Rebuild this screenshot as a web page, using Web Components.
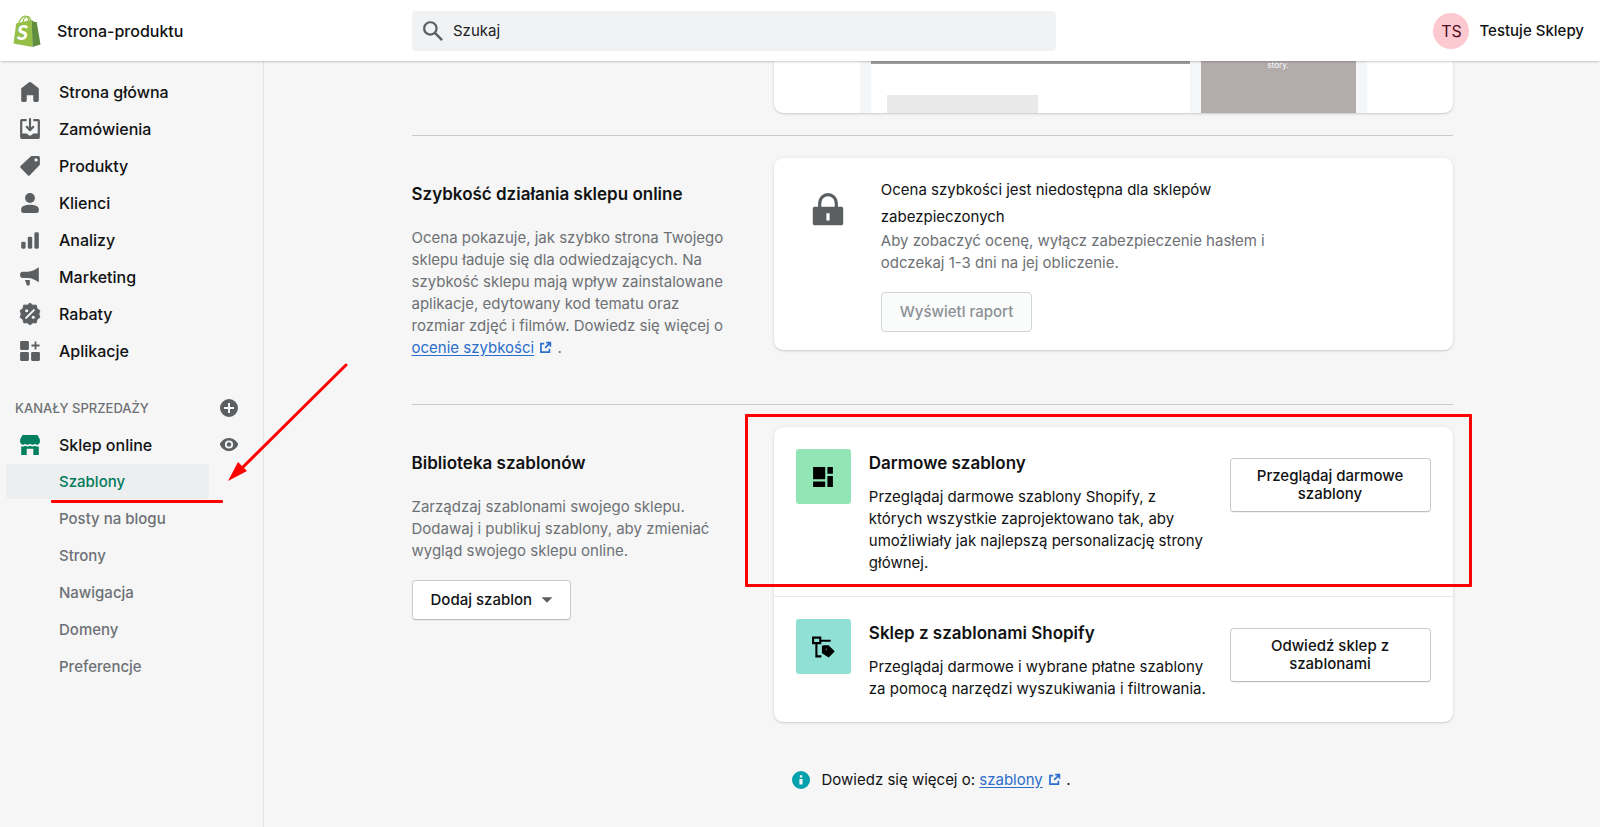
<!DOCTYPE html>
<html lang="pl">
<head>
<meta charset="utf-8">
<meta name="viewport" content="width=device-width, initial-scale=1">
<title>Strona-produktu</title>
<style>
	body {
		margin: 0;
		background: #f6f6f6;
		color: #111213;
		font: 15px/22px Inter, "Noto Sans", sans-serif;
	}
</style>
</head>
<body>
<admin-shell></admin-shell>

<script>
const icons = {
	home: '<path d="M18 7.26V17.5c0 .84-.67 1.5-1.5 1.5h-2.2c-.83 0-1.3-.66-1.3-1.5V13H7v4.5c0 .84-.47 1.5-1.3 1.5H3.5c-.83 0-1.5-.68-1.5-1.52V7.26a1.5 1.5 0 0 1 .615-1.21l6.59-4.82a1.48 1.48 0 0 1 1.59 0l6.59 4.82A1.5 1.5 0 0 1 18 7.26z"/>',
	orders: '<path d="M11 1a1 1 0 1 0-2 0v7.586L7.707 7.293a1 1 0 0 0-1.414 1.414l3 3a1 1 0 0 0 1.414 0l3-3a1 1 0 0 0-1.414-1.414L11 8.586V1z"/><path d="M3 14V3h4V1H2.5A1.5 1.5 0 0 0 1 2.5v15A1.5 1.5 0 0 0 2.5 19h15a1.5 1.5 0 0 0 1.5-1.5v-15A1.5 1.5 0 0 0 17.5 1H13v2h4v11h-3.5c-.775 0-1.388.662-1.926 1.244l-.11.12A1.994 1.994 0 0 1 10 16a1.994 1.994 0 0 1-1.463-.637l-.111-.12C7.888 14.664 7.275 14 6.5 14H3z"/>',
	products: '<path fill-rule="evenodd" d="M10.6 1.4A1.4 1.4 0 0 1 11.6 1H17.6A1.4 1.4 0 0 1 19 2.4v6a1.4 1.4 0 0 1-.4 1l-9 9.2a1 1 0 0 1-1.4 0l-6.8-7.1a1 1 0 0 1 0-1.4zM15.5 6a1.5 1.5 0 1 0 0-3 1.5 1.5 0 0 0 0 3z"/>',
	customers: '<circle cx="10" cy="5.5" r="4.5"/><path d="M2 15.5C2 12.5 6.5 11.5 10 11.5s8 1 8 4V17a2 2 0 0 1-2 2H4a2 2 0 0 1-2-2z"/>',
	analytics: '<rect x="2" y="11.5" width="4" height="6.5" rx="1.3"/><rect x="8" y="7" width="4" height="11" rx="1.3"/><rect x="14" y="3" width="4" height="15" rx="1.3"/>',
	marketing: '<path d="M18 1.2v13.6c-3.5-2.5-6.5-3.6-10-3.8H3.500A2.5 2.5 0 0 1 1 8.5v-.8a2.5 2.5 0 0 1 2.5-2.5H8c3.5-.2 6.500-1.500 10-4z"/><path d="M5.500 12.700h4.300v4.100a1 1 0 0 1-1 1H8a1 1 0 0 1-1-.8z"/>',
	discounts: '<path d="M10 0l2.5 2 3.2-.1.7 3.2 2.600 1.900-1 3 1 3-2.600 1.900-.7 3.200-3.200-.1L10 20l-2.500-2-3.200.1-.7-3.200L1 13l1-3-1-3 2.600-1.900.7-3.200 3.200.1z" stroke="currentColor" stroke-linejoin="round" stroke-width=".8"/><path d="M6.500 13.500l7-7" stroke="#f6f6f6" stroke-width="1.800" stroke-linecap="round"/><circle cx="7" cy="7" r="1.400" fill="#f6f6f6"/><circle cx="13" cy="13" r="1.400" fill="#f6f6f6"/>',
	apps: '<rect x="1" y="1" width="8" height="8" rx="1"/><rect x="1" y="11" width="8" height="8" rx="1"/><rect x="11" y="11" width="8" height="8" rx="1"/><path d="M14.200 1.300h1.600v2.900h2.900v1.600h-2.900v2.900h-1.600V5.800h-2.900V4.200h2.900z"/>',
	store: '<path d="M3.200 1h13.600L19 5v2.200a2.600 2.600 0 0 1-4.500 1.600 3 3 0 0 1-4.500 0 3 3 0 0 1-4.500 0A2.600 2.600 0 0 1 1 7.200V5z"/><path d="M2 11.300c1.300.3 2.600 0 3.500-.7 1.300.9 3.200.9 4.500 0 1.300.9 3.200.9 4.500 0 .9.7 2.200 1 3.500.7V19h-5v-5.500H7V19H2z"/>',
	plus: '<path fill-rule="evenodd" d="M10 1a9 9 0 1 1 0 18 9 9 0 0 1 0-18zM9 5v4H5v2h4v4h2v-4h4V9h-4V5z"/>',
	eye: '<path fill-rule="evenodd" d="M19 8.700C18 6.500 14.500 3 10 3S2 6.500 1 8.700v1C2 12.500 5.500 16 10 16s8-3.500 9-6.300zM10 13.600a4.100 4.100 0 1 1 0-8.200 4.100 4.100 0 0 1 0 8.200z"/><circle cx="10" cy="9.500" r="2.200"/>',
	search: '<path fill-rule="evenodd" d="M2 8a6 6 0 1 1 10.900 3.500l5.500 5.400-1.500 1.500-5.400-5.500A6 6 0 0 1 2 8zm6-4.200a4.200 4.200 0 1 0 0 8.400 4.200 4.200 0 0 0 0-8.400z" transform="translate(-1.200 -1.200) scale(1.100)"/>',
	external: '<path d="M8 4H3v13h13v-5M11 2.500h6.500V9M17 3l-7.500 7.500" fill="none" stroke="currentColor" stroke-width="2.600"/>',
	caret: '<path d="M4 7h12l-6 6z"/>',
	info: '<path fill-rule="evenodd" d="M10 0a10 10 0 1 1 0 20 10 10 0 0 1 0-20zM8.700 4.800v2.400h2.700V4.800zM8.200 9v6h3.500V9z"/>',
	lock: '<path fill-rule="evenodd" d="M1.500 8h17a1 1 0 0 1 1 1v9.500a1 1 0 0 1-1 1h-17a1 1 0 0 1-1-1V9a1 1 0 0 1 1-1zM9 12v4.500h2V12z"/><path d="M4.800 9V5.600a5.200 5.200 0 0 1 10.400 0V9" fill="none" stroke="currentColor" stroke-width="2"/>',
	layout: '<path d="M1 1h11v11H1zM1 14h11v5H1zM14 1h5v6h-5zM14 9h5v10h-5z"/>',
	structure: '<path d="M1 1.500h6.500v5H1zM7.500 4.300H17M4 6.500v12h4.500" fill="none" stroke="currentColor" stroke-width="1.900"/><path fill-rule="evenodd" d="M10 9h5l5 5-5 5-5.500-3.800V9.500zM12 11v2h2v-2z" stroke="currentColor" stroke-linejoin="round"/>'
};

class BaseElement extends HTMLElement {
	constructor() {
		super();
		this.attachShadow({ mode: 'open' });
	}

	connectedCallback() {
		this.shadowRoot.innerHTML = `<style>*, *::before { box-sizing: border-box; }${this.css()}</style>${this.markup()}`;
	}
}

class AdminIcon extends BaseElement {
	css = () => `
		:host { display: inline-flex; flex: none; width: var(--icon-size, 22px); height: var(--icon-size, 22px); }
		svg { width: 100%; height: 100%; fill: currentColor; overflow: visible; }`;

	markup = () => `<svg viewBox="0 0 20 20" aria-hidden="true">${icons[this.getAttribute('name')]}</svg>`;
}

class AdminButton extends BaseElement {
	css = () => `
		:host { display: inline-flex; }
		button {
			display: flex;
			align-items: center;
			justify-content: center;
			gap: 6px;
			width: 100%;
			min-height: 40px;
			padding: 8px 18px;
			border: 1px solid #c9cccf;
			border-bottom-color: #babfc3;
			border-radius: 4px;
			background: white;
			color: inherit;
			font: 500 15px/18px Inter, sans-serif;
			box-shadow: 0 1px 0 rgba(0, 0, 0, 0.05);
		}
		button:disabled {
			border-color: #d2d5d8;
			background: #fafbfb;
			color: #8c9196;
			box-shadow: none;
		}`;

	markup = () => `<button type="button" ${this.hasAttribute('disabled') ? 'disabled' : ''}><slot></slot></button>`;
}

class ExternalLink extends BaseElement {
	css = () => `
		a { color: #2c6ecb; text-underline-offset: 2px; }
		admin-icon { --icon-size: 13px; color: #2c6ecb; margin: 0 1px; vertical-align: -1px; }`;

	markup = () => `<a href="#"><slot></slot></a> <admin-icon name="external"></admin-icon>`;
}

class ShopLogo extends BaseElement {
	css = () => `
		:host { display: block; width: 28px; height: 32px; }
		text { font: italic 900 21px Lato, sans-serif; fill: white; }`;

	markup = () => `
		<svg width="28" height="32" viewBox="0 0 28 32" aria-hidden="true">
			<path d="M6 8C7 4 10 1 12.500 1.200c2 .2 3 3 3 5.500M10 7c.5-3 2.500-5.500 5-5.300 1.500.2 2.300 2 2.500 4" fill="none" stroke="#95bf47" stroke-width="1.300"/>
			<path d="M3.200 8.600L18.700 4.800 19.500 32 .5 28.500z" fill="#95bf47"/>
			<path d="M18.700 4.800l2 1.900 3 .3 3.800 22.500L19.500 32z" fill="#5e8e3e"/>
			<text x="4" y="25">S</text>
		</svg>`;
}

class TopBar extends BaseElement {
	css = () => `
		:host {
			display: grid;
			grid-template-columns: 264px 1fr;
			align-items: center;
			height: 61px;
			background: white;
			box-shadow: 0 2px 2px -1px rgba(0, 0, 0, 0.2);
			position: relative;
			z-index: 2;
			font-weight: 500;
		}
		.brand { display: flex; align-items: center; gap: 16px; padding-left: 13px; font-size: 16px; }
		.tools {
			display: flex;
			align-items: center;
			justify-content: space-between;
			gap: 22px;
			padding: 0 16px 0 max(22px, calc((100% - 1040px) / 2));
		}
		label {
			flex: 0 1 644px;
			display: flex;
			align-items: center;
			gap: 9px;
			height: 40px;
			padding: 0 10px;
			border-radius: 4px;
			background: #f1f2f4;
			color: #5c5f62;
		}
		input {
			flex: 1;
			min-width: 0;
			border: 0;
			padding: 0;
			background: none;
			font: 400 15px/22px Inter, sans-serif;
			color: #111213;
		}
		input::placeholder { color: #202223; opacity: 1; }
		.user { display: flex; align-items: center; gap: 10px; white-space: nowrap; }
		.avatar {
			width: 36px;
			border-radius: 50%;
			background: #fdc9d0;
			color: #4f0e1f;
			font-size: 16px;
			font-weight: 400;
			line-height: 36px;
			text-align: center;
		}`;

	markup = () => `
		<div class="brand"><shop-logo></shop-logo><span>Strona-produktu</span></div>
		<div class="tools">
			<label><admin-icon name="search"></admin-icon><input type="search" placeholder="Szukaj" aria-label="Szukaj"></label>
			<div class="user"><span class="avatar">TS</span><span>Testuje Sklepy</span></div>
		</div>`;
}

class NavItem extends BaseElement {
	css = () => `
		:host { display: flex; align-items: center; height: 37px; padding: 0 24px 0 6px; position: relative; }
		a {
			flex: 1;
			display: flex;
			align-items: center;
			height: 35px;
			padding-left: 13px;
			border-radius: 4px;
			color: #111213;
			font-size: 16px;
			font-weight: 500;
			text-decoration: none;
		}
		.icon { width: 40px; height: 22px; color: #5c5f62; }
		:host([sub]) { padding-right: 54px; }
		:host([sub]) a { color: #6d7175; font-size: 15px; }
		:host([open]) .icon { color: #008060; }
		:host([sub][active]) a { color: #007a5c; background: #edeeef; }
		:host([active])::after {
			content: "";
			position: absolute;
			left: 51px;
			right: 40px;
			bottom: -3px;
			height: 3px;
			border-radius: 1px;
			background: #ff0000;
		}`;

	markup = () => {
		const icon = this.getAttribute('icon');

		return `<a href="#"><span class="icon">${icon ? `<admin-icon name="${icon}"></admin-icon>` : ''}</span><slot></slot></a><slot name="action"></slot>`;
	};
}

class SideNav extends BaseElement {
	css = () => `
		:host { display: block; padding-top: 12px; border-right: 1px solid #e1e3e5; position: relative; }
		.heading {
			display: flex;
			align-items: center;
			justify-content: space-between;
			height: 37px;
			margin-top: 20px;
			padding: 0 24px 0 15px;
			color: #6d7175;
			font-size: 13px;
			font-weight: 500;
		}
		button {
			display: flex;
			padding: 0;
			border: 0;
			background: none;
			color: #5c5f62;
			--icon-size: 20px;
		}
		.arrow { position: absolute; left: 222px; top: 300px; z-index: 3; }`;

	markup = () => `
		<nav>
			<nav-item icon="home">Strona główna</nav-item>
			<nav-item icon="orders">Zamówienia</nav-item>
			<nav-item icon="products">Produkty</nav-item>
			<nav-item icon="customers">Klienci</nav-item>
			<nav-item icon="analytics">Analizy</nav-item>
			<nav-item icon="marketing">Marketing</nav-item>
			<nav-item icon="discounts">Rabaty</nav-item>
			<nav-item icon="apps">Aplikacje</nav-item>
			<div class="heading">KANAŁY SPRZEDAŻY <button type="button" aria-label="Dodaj kanał"><admin-icon name="plus"></admin-icon></button></div>
			<nav-item icon="store" open>Sklep online <button slot="action" type="button" aria-label="Podgląd"><admin-icon name="eye"></admin-icon></button></nav-item>
			<nav-item sub active>Szablony</nav-item>
			<nav-item sub>Posty na blogu</nav-item>
			<nav-item sub>Strony</nav-item>
			<nav-item sub>Nawigacja</nav-item>
			<nav-item sub>Domeny</nav-item>
			<nav-item sub>Preferencje</nav-item>
		</nav>
		<svg class="arrow" width="130" height="124" aria-hidden="true">
			<path d="M124 4L18 109" stroke="#f00" stroke-width="3" stroke-linecap="round"/>
			<path d="M6 120L16 101 25 110z" fill="#f00"/>
		</svg>`;
}

class AdminCard extends BaseElement {
	css = () => `
		:host {
			display: block;
			border-radius: 9px;
			background: white;
			box-shadow: 0 0 5px rgba(23, 24, 24, 0.05), 0 1px 2px rgba(0, 0, 0, 0.15);
		}`;

	markup = () => '<slot></slot>';
}

class AnnotatedSection extends BaseElement {
	css = () => `
		:host {
			display: grid;
			grid-template-columns: 1fr 2fr;
			align-items: start;
			gap: 23px;
			padding: 22px 0 45px;
			border-top: 1px solid #c9cccf;
		}
		:host([first]) { padding: 0 0 22px; border: 0; }
		:host([last]) { padding-bottom: 0; }
		.about { padding: 23px 18px 0 0; color: #6d7175; }
		h2 { margin: 0 0 19px; color: #111213; font-size: 17px; line-height: 27px; font-weight: 600; }`;

	markup = () => {
		const heading = this.getAttribute('heading');

		return `<div class="about">${heading ? `<h2>${heading}</h2>` : ''}<slot name="about"></slot></div><slot></slot>`;
	};
}

class ThemePreview extends BaseElement {
	css = () => `
		:host {
			display: grid;
			grid-template-columns: 319fr 155fr;
			gap: 11px;
			height: 52px;
			margin: 0 86px;
			padding: 0 11px;
			background: #f4f6f8;
		}
		.desktop { background: white; border-top: 3px solid #a29d9e; padding: 31px 152px 0 16px; }
		.block { height: 18px; background: #e9e9e9; }
		.mobile {
			background: #b2acab;
			color: white;
			font-size: 8px;
			line-height: 8px;
			text-align: center;
		}
		p { margin: 0; }`;

	markup = () => `
		<div class="desktop"><div class="block"></div></div>
		<div class="mobile"><p>story.</p></div>`;
}

class SpeedNotice extends BaseElement {
	css = () => `
		:host { display: flex; gap: 37px; padding: 18px 38px; }
		admin-icon { --icon-size: 32px; margin-top: 18px; color: #5c5f62; }
		.copy { max-width: 400px; }
		h3 { margin: 0; font-size: 15px; line-height: 27px; font-weight: 400; }
		p { margin: 0 0 18px; color: #6d7175; }
		admin-button { display: flex; width: fit-content; }`;

	markup = () => `
		<admin-icon name="lock"></admin-icon>
		<div class="copy">
			<h3>Ocena szybkości jest niedostępna dla sklepów zabezpieczonych</h3>
			<p>Aby zobaczyć ocenę, wyłącz zabezpieczenie hasłem i odczekaj 1-3 dni na jej obliczenie.</p>
			<admin-button disabled>Wyświetl raport</admin-button>
		</div>`;
}

class ThemeOffer extends BaseElement {
	css = () => `
		:host { display: flex; gap: 18px; padding: 22px; position: relative; }
		:host(:not(:first-child)) { border-top: 1px solid #e6e7e8; }
		:host([marked])::after {
			content: "";
			position: absolute;
			inset: -13px -19px 9px -29px;
			border: 3px solid #ff0000;
			border-radius: 1px;
		}
		.tile {
			flex: none;
			display: flex;
			align-items: center;
			justify-content: center;
			width: 55px;
			height: 55px;
			border-radius: 3px;
			background: var(--tile);
			color: black;
		}
		.copy { flex: 1; padding-top: 1px; }
		h3 { margin: 0 0 9px; font-size: 17px; line-height: 27px; font-weight: 600; }
		p { margin: 0; }
		admin-button { flex: none; width: 201px; margin-top: 9px; align-self: flex-start; }`;

	markup = () => `
		<div class="tile"><admin-icon name="${this.getAttribute('icon')}"></admin-icon></div>
		<div class="copy"><h3>${this.getAttribute('heading')}</h3><p><slot></slot></p></div>
		<admin-button>${this.getAttribute('action')}</admin-button>`;
}

class HelpFooter extends BaseElement {
	css = () => `
		:host { display: flex; align-items: center; gap: 12px; margin-top: 47px; padding-left: 380px; }
		admin-icon { --icon-size: 18px; color: #00a0ac; }`;

	markup = () => '<admin-icon name="info"></admin-icon><span><slot></slot></span>';
}

class AdminShell extends BaseElement {
	css = () => `
		:host { display: block; }
		.layout { display: grid; grid-template-columns: 264px 1fr; min-height: calc(100vh - 61px); }
		main { width: 100%; max-width: 1041px; margin: 0 auto; padding-bottom: 22px; }
		p { margin: 0 0 18px; }
		.clipped { border-radius: 0 0 9px 9px; }
		.caret { --icon-size: 18px; margin-right: -4px; color: #5c5f62; }
		[slot="about"] > admin-button { color: #111213; }`;

	markup = () => `
		<top-bar></top-bar>
		<div class="layout">
			<side-nav></side-nav>
			<main>
				<annotated-section first>
					<admin-card class="clipped"><theme-preview></theme-preview></admin-card>
				</annotated-section>
				<annotated-section heading="Szybkość działania sklepu online">
					<div slot="about">Ocena pokazuje, jak szybko strona Twojego sklepu ładuje się dla odwiedzających. Na szybkość sklepu mają wpływ zainstalowane aplikacje, edytowany kod tematu oraz rozmiar zdjęć i filmów. Dowiedz się więcej o <external-link>ocenie szybkości</external-link> .</div>
					<admin-card><speed-notice></speed-notice></admin-card>
				</annotated-section>
				<annotated-section last heading="Biblioteka szablonów">
					<div slot="about">
						<p>Zarządzaj szablonami swojego sklepu. Dodawaj i publikuj szablony, aby zmieniać wygląd swojego sklepu online.</p>
						<admin-button>Dodaj szablon <admin-icon class="caret" name="caret"></admin-icon></admin-button>
					</div>
					<admin-card>
						<theme-offer marked icon="layout" style="--tile: #92e6b5" heading="Darmowe szablony" action="Przeglądaj darmowe szablony">Przeglądaj darmowe szablony Shopify, z których wszystkie zaprojektowano tak, aby umożliwiały jak najlepszą personalizację strony głównej.</theme-offer>
						<theme-offer icon="structure" style="--tile: #91e0d6" heading="Sklep z szablonami Shopify" action="Odwiedź sklep z szablonami">Przeglądaj darmowe i wybrane płatne szablony za pomocą narzędzi wyszukiwania i filtrowania.</theme-offer>
					</admin-card>
				</annotated-section>
				<help-footer>Dowiedz się więcej o: <external-link>szablony</external-link> .</help-footer>
			</main>
		</div>`;
}

customElements.define('admin-icon', AdminIcon);
customElements.define('admin-button', AdminButton);
customElements.define('external-link', ExternalLink);
customElements.define('shop-logo', ShopLogo);
customElements.define('top-bar', TopBar);
customElements.define('nav-item', NavItem);
customElements.define('side-nav', SideNav);
customElements.define('admin-card', AdminCard);
customElements.define('annotated-section', AnnotatedSection);
customElements.define('theme-preview', ThemePreview);
customElements.define('speed-notice', SpeedNotice);
customElements.define('theme-offer', ThemeOffer);
customElements.define('help-footer', HelpFooter);
customElements.define('admin-shell', AdminShell);
</script>
</body>
</html>
